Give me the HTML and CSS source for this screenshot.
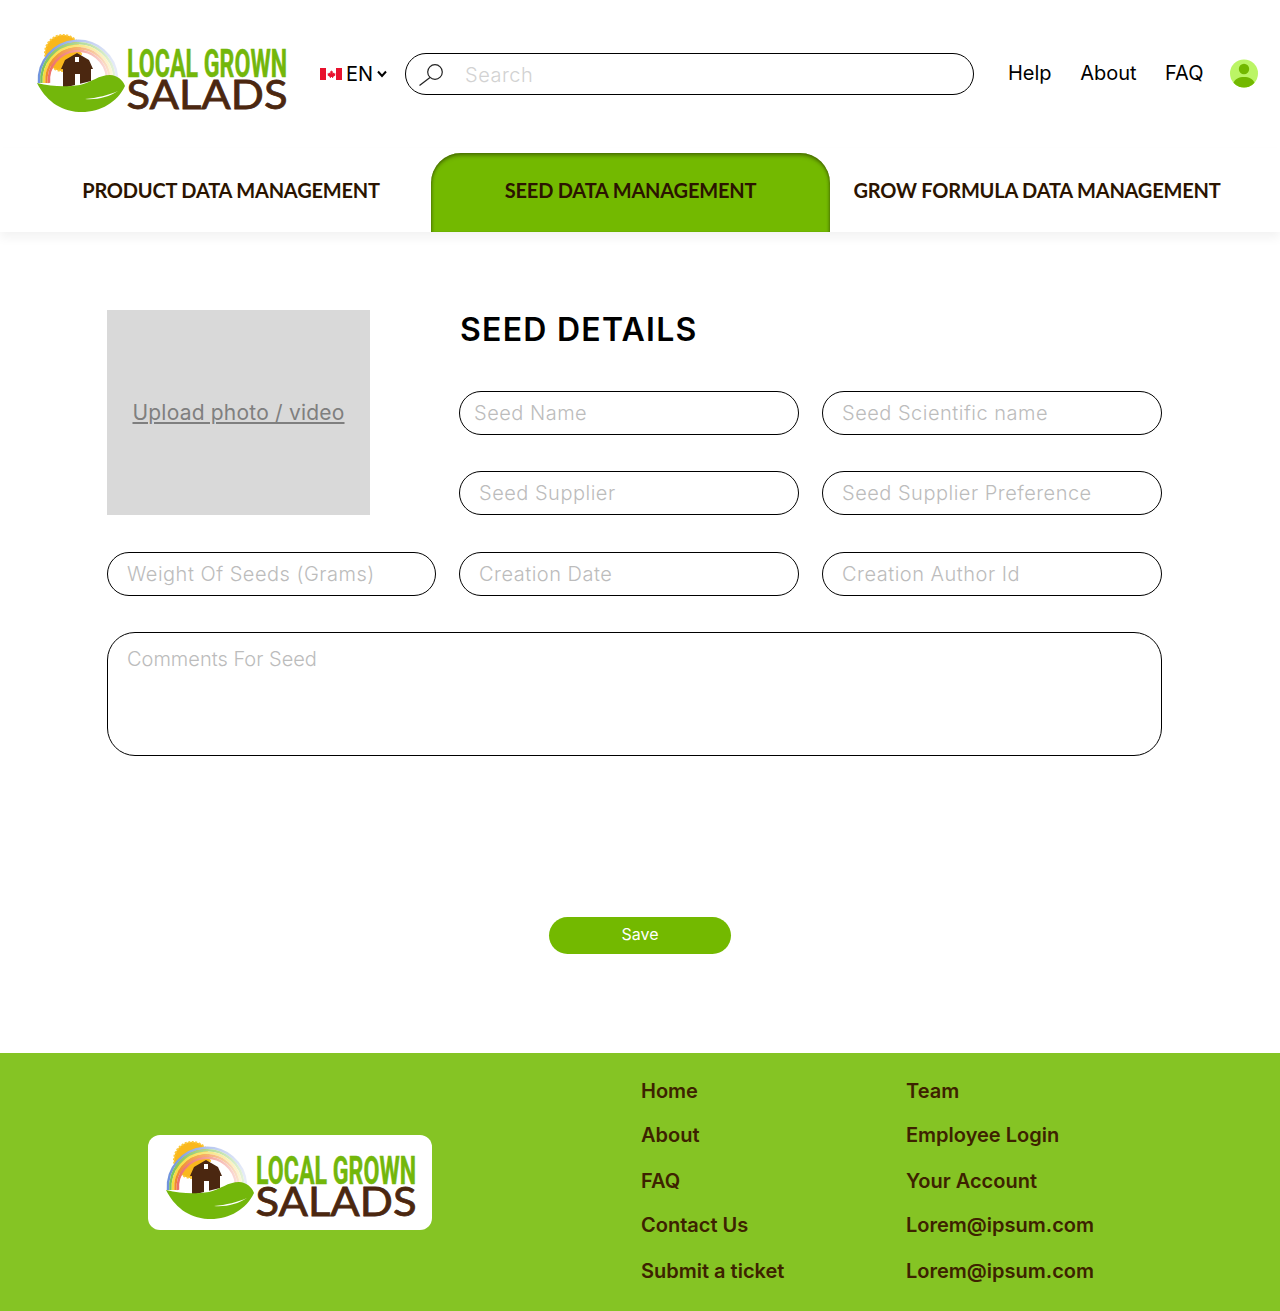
FILE: index.html
```html
<!DOCTYPE html>
<html lang="en">
<head>
<meta charset="utf-8">
<title>Seed Details</title>
<link rel="stylesheet" href="styles.css">
</head>
<body>
<header class="topbar">
  <svg class="logo" viewBox="0 0 250 80" width="250" height="80" role="img" aria-label="Local Grown Salads">
    <defs>
      <linearGradient id="g1" x1="0" x2="1" y1="0" y2="0"><stop offset="0" stop-color="#6f93dd"/><stop offset=".55" stop-color="#b9c9f0"/><stop offset="1" stop-color="#e8edf9"/></linearGradient>
      <linearGradient id="g2" x1="0" x2="1" y1="0" y2="0"><stop offset="0" stop-color="#7cc25a"/><stop offset=".55" stop-color="#b5dc9c"/><stop offset="1" stop-color="#e4f2da"/></linearGradient>
      <linearGradient id="g3" x1="0" x2="1" y1="0" y2="0"><stop offset="0" stop-color="#f6dc3c"/><stop offset=".55" stop-color="#f8e88c"/><stop offset="1" stop-color="#fcf6d6"/></linearGradient>
      <linearGradient id="g4" x1="0" x2="1" y1="0" y2="0"><stop offset="0" stop-color="#f08a2c"/><stop offset=".55" stop-color="#f6b57a"/><stop offset="1" stop-color="#fbe3cd"/></linearGradient>
      <linearGradient id="g5" x1="0" x2="1" y1="0" y2="0"><stop offset="0" stop-color="#ec6f6a"/><stop offset=".55" stop-color="#f4a79f"/><stop offset="1" stop-color="#fadcd8"/></linearGradient>
    </defs>
    <circle class="sun" cx="26" cy="20" r="18"/>
    <path class="arc a1" d="M2 50A39 39 0 0 1 80 44"/>
    <path class="arc a2" d="M4.500 50A36.500 36.500 0 0 1 77.500 44"/>
    <path class="arc a3" d="M7 50A34 34 0 0 1 75 44"/>
    <path class="arc a4" d="M9.500 50A31.500 31.500 0 0 1 72.500 44"/>
    <path class="arc a5" d="M12 50A29 29 0 0 1 70 44"/>
    <path class="barn" d="M24 36L28 27 40 20 52 27 56 36H54V48L26 55V36Z"/>
    <path class="door" d="M38 24h4v5h-4zM38 41h5v13h-5z"/>
    <path class="leaf" d="M0 50C16 54 30 54 43 52 55 49 62 42 73 42 80 42 86 47 88 53 80 70 62 80 42 79 22 78 8 66 0 50Z"/>
    <path class="vein" d="M48 66C60 65 72 62 81 58 72 64 60 67 48 66Z"/>
    <text class="logo-top" x="90" y="43.500" textLength="160" lengthAdjust="spacingAndGlyphs">LOCAL GROWN</text>
    <text class="logo-bottom" x="89.500" y="76" textLength="161" lengthAdjust="spacingAndGlyphs">SALADS</text>
  </svg>
  <div class="lang">
    <svg class="flag" viewBox="0 0 22 12" width="22" height="12" aria-hidden="true">
      <rect width="22" height="12" fill="#fff"/>
      <rect width="6" height="12" fill="#e8112d"/>
      <rect x="16" width="6" height="12" fill="#e8112d"/>
      <path d="M11 2l1 1.600 1-.4-.4 2.200 1.400-.8.4 1 1.200-.2-.5 1.500.4.4-2.500 1.700.2 1h-.9l-.3-1h-1l-.3 1h-.9l.2-1-2.500-1.700.4-.4-.5-1.500 1.200.2.400-1 1.400.8-.4-2.200 1 .4z" fill="#e8112d"/>
    </svg>
    <span>EN</span>
    <svg class="chev" viewBox="0 0 10 8" width="10" height="8" aria-hidden="true"><path d="M1 1.500l4 4.500 4-4.500"/></svg>
  </div>
  <label class="search">
    <svg class="search-icon" viewBox="0 0 26 26" width="26" height="26" aria-hidden="true"><circle cx="16" cy="11" r="7.300"/><path d="M11 16.500L.5 24.500"/></svg>
    <input class="search-input" type="text" placeholder="Search">
  </label>
  <nav class="toplinks">
    <a href="#">Help</a>
    <a href="#">About</a>
    <a href="#">FAQ</a>
  </nav>
  <svg class="avatar" viewBox="0 0 28 29" width="28" height="29" aria-hidden="true">
    <circle cx="14" cy="14.500" r="14" fill="#bbf565"/>
    <circle cx="14" cy="10" r="5.200" fill="#72b800"/>
    <path d="M3.500 23.800C5 20 9 18 14 18s9 2 10.500 5.800A14 14 0 0 1 3.500 23.800Z" fill="#72b800"/>
  </svg>
</header>

<nav class="tabs">
  <a class="tab" href="#">PRODUCT DATA MANAGEMENT</a>
  <a class="tab tab-active" href="#">SEED DATA MANAGEMENT</a>
  <a class="tab" href="#">GROW FORMULA DATA MANAGEMENT</a>
</nav>

<main class="content">
  <form class="form-grid">
    <div class="photo"><a href="#">Upload photo / video</a></div>
    <h1 class="title">SEED DETAILS</h1>
    <input class="field field-tight" type="text" placeholder="Seed Name">
    <input class="field" type="text" placeholder="Seed Scientific name">
    <input class="field" type="text" placeholder="Seed Supplier">
    <input class="field" type="text" placeholder="Seed Supplier Preference">
    <input class="field row-three" type="text" placeholder="Weight Of Seeds (Grams)">
    <input class="field row-three" type="text" placeholder="Creation Date">
    <input class="field row-three" type="text" placeholder="Creation Author Id">
    <textarea class="comments" placeholder="Comments For Seed"></textarea>
  </form>
  <div class="actions"><button class="save" type="button">Save</button></div>
</main>

<footer class="footer">
  <div class="footer-logo">
    <svg class="logo" viewBox="0 0 250 80" width="250" height="80" role="img" aria-label="Local Grown Salads">
      <circle class="sun" cx="26" cy="20" r="18"/>
      <path class="arc a1" d="M2 50A39 39 0 0 1 80 44"/>
      <path class="arc a2" d="M4.500 50A36.500 36.500 0 0 1 77.500 44"/>
      <path class="arc a3" d="M7 50A34 34 0 0 1 75 44"/>
      <path class="arc a4" d="M9.500 50A31.500 31.500 0 0 1 72.500 44"/>
      <path class="arc a5" d="M12 50A29 29 0 0 1 70 44"/>
      <path class="barn" d="M24 36L28 27 40 20 52 27 56 36H54V48L26 55V36Z"/>
      <path class="door" d="M38 24h4v5h-4zM38 41h5v13h-5z"/>
      <path class="leaf" d="M0 50C16 54 30 54 43 52 55 49 62 42 73 42 80 42 86 47 88 53 80 70 62 80 42 79 22 78 8 66 0 50Z"/>
      <path class="vein" d="M48 66C60 65 72 62 81 58 72 64 60 67 48 66Z"/>
      <text class="logo-top" x="90" y="43.500" textLength="160" lengthAdjust="spacingAndGlyphs">LOCAL GROWN</text>
      <text class="logo-bottom" x="89.500" y="76" textLength="161" lengthAdjust="spacingAndGlyphs">SALADS</text>
    </svg>
  </div>
  <div class="footer-links">
    <a href="#">Home</a><a href="#">Team</a>
    <a href="#">About</a><a href="#">Employee Login</a>
    <a href="#">FAQ</a><a href="#">Your Account</a>
    <a href="#">Contact Us</a><a href="#">Lorem@ipsum.com</a>
    <a href="#">Submit a ticket</a><a href="#">Lorem@ipsum.com</a>
  </div>
</footer>
</body>
</html>
```
FILE: styles.css
```css
* { box-sizing: border-box; }
html, body { margin: 0; padding: 0; background: #fff; }
body { font-family: "Inter", "Liberation Sans", sans-serif; color: #000; width: 1280px; }
a { color: inherit; text-decoration: none; }

.topbar { display: flex; align-items: center; height: 148px; padding: 0 22px 0 37px; }
.topbar .logo { margin-top: -2px; flex: none; }
.logo { display: block; overflow: visible; }
.sun { fill: #fab71c; stroke: #fbc93c; stroke-width: 2; stroke-dasharray: 2 1.500; }
.arc { fill: none; stroke-width: 2.500; }
.a1 { stroke: url(#g1); }
.a2 { stroke: url(#g2); }
.a3 { stroke: url(#g3); }
.a4 { stroke: url(#g4); }
.a5 { stroke: url(#g5); }
.barn { fill: #4b2710; }
.door { fill: #fff; }
.leaf { fill: #73b70b; }
.vein { fill: #fff; }
.logo-top { font-family: "Roboto", sans-serif; font-weight: 700; font-size: 38px; fill: #73b70b; stroke: #73b70b; stroke-width: .5; }
.logo-bottom { font-family: "Lato", sans-serif; font-weight: 400; font-size: 40px; fill: #4b2710; stroke: #4b2710; stroke-width: .8; }

.lang { display: flex; align-items: center; margin-left: 33px; font-size: 20px; width: 85px; flex: none; }
.flag { margin-right: 4px; }
.chev { margin-left: 4px; fill: none; stroke: #000; stroke-width: 2; }

.search { display: flex; align-items: center; width: 569px; height: 42px; border: 1px solid #000; border-radius: 21px; padding-left: 13px; flex: none; }
.search-icon { fill: none; stroke: #222; stroke-width: 1.200; flex: none; }
.search-input { border: 0; outline: 0; flex: 1; min-width: 0; margin-left: 20px; padding: 2px 0 0; font: 300 20px "Inter", sans-serif; letter-spacing: .5px; background: transparent; }
.search-input::placeholder { color: #d2d2d2; opacity: 1; }

.toplinks { display: flex; gap: 28.500px; margin: -2px 0 0 34px; font-size: 20px; }
.avatar { margin: -2px 0 0 auto; flex: none; }

.tabs { display: grid; grid-template-columns: 400px 399px 414px; height: 84px; padding: 5px 0 0 31px; box-shadow: 0 6px 10px rgba(0,0,0,.05); position: relative; }
.tab { display: flex; align-items: flex-start; justify-content: center; padding-top: 26px; font-family: "Lato", sans-serif; font-weight: 700; font-size: 20px; line-height: 22px; letter-spacing: -.2px; color: #2b1400; white-space: nowrap; }
.tab-active { background: #73b900; border-radius: 30px 30px 0 0; box-shadow: inset 0 4px 4px -2px rgba(50,70,0,.7), inset 3px 0 3px -2px rgba(50,70,0,.5), inset -3px 0 3px -2px rgba(50,70,0,.5); }

.content { padding: 78px 118px 99px 107px; }
.form-grid { display: grid; grid-template-columns: 329px 340px 340px; column-gap: 23px; grid-template-rows: 45px 44px 44px 44px auto; row-gap: 36px; }
.photo { grid-column: 1; grid-row: 1 / 4; width: 263px; height: 205px; background: #d9d9d9; display: flex; align-items: center; justify-content: center; }
.photo a { color: #7f7f7f; font-size: 21px; font-weight: 400; letter-spacing: .2px; text-decoration: underline; }
.title { grid-column: 2 / 4; grid-row: 1; margin: 0 0 0 1px; font-size: 32px; line-height: 40px; font-weight: 600; letter-spacing: 1.250px; font-family: "Inter", sans-serif; }
.field { height: 44px; border: 1px solid #000; border-radius: 22px; padding: 0 19px; outline: 0; background: #fff; font: 300 20px "Inter", sans-serif; letter-spacing: .5px; }
.field-tight { padding-left: 14px; }
.row-three { margin-top: 1px; }
.field::placeholder, .comments::placeholder { color: #bcbcbc; opacity: 1; }
.comments { grid-column: 1 / 4; height: 124px; margin-top: 1px; border: 1px solid #000; border-radius: 28px; padding: 14px 19px; outline: 0; resize: none; font: 300 20px "Inter", sans-serif; }

.actions { display: flex; justify-content: center; margin: 161px -118px 0 -107px; }
.save { width: 182px; height: 37px; border: 0; border-radius: 19px; padding: 0 0 3px; background: #73b900; color: #fff; font: 400 16px "Inter", sans-serif; }

.footer { display: flex; height: 258px; background: #85c424; padding: 82px 0 0 148px; color: #3d2200; }
.footer-logo { width: 284px; height: 95px; background: #fff; border-radius: 12px; padding: 5px 18px; flex: none; }
.footer-links { display: grid; grid-template-columns: 265px auto; grid-template-rows: 44px 46px 44px 46px 45px; margin: -56px 0 0 209px; font-size: 20px; font-weight: 600; line-height: 24px; }
```
